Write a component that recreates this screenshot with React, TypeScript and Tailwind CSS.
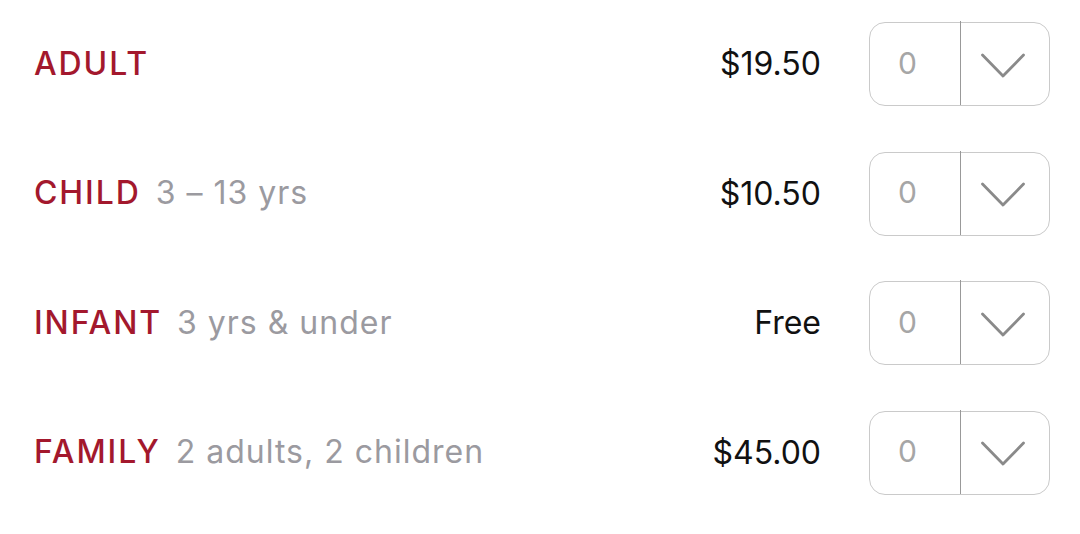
import React from "react";

const rows = [
  { label: "ADULT", desc: "", price: "$19.50" },
  { label: "CHILD", desc: "3 – 13 yrs", price: "$10.50" },
  { label: "INFANT", desc: "3 yrs & under", price: "Free" },
  { label: "FAMILY", desc: "2 adults, 2 children", price: "$45.00" },
];

function Chevron() {
  return (
    <svg width="46" height="28" viewBox="0 0 46 28" fill="none">
      <path d="M2.5 3 L23 24 L43.5 3" stroke="#8a8a8a" strokeWidth="2.8" strokeLinecap="round" strokeLinejoin="round" />
    </svg>
  );
}

export default function App() {
  return (
    <div
      className="w-[1080px] h-[534px] bg-white overflow-hidden flex flex-col gap-[45.6px] pt-[22px] pl-[34px] pr-[30px]"
      style={{ fontFamily: "Inter, 'Noto Sans', sans-serif" }}
    >
      {rows.map((r) => (
        <div key={r.label} className="flex items-center h-[84px]">
          <div className="flex items-baseline flex-1 -mt-[1px]">
            <span className="text-[32px] font-medium text-[#a3182d] tracking-[1.9px]">{r.label}</span>
            {r.desc && (
              <span className="ml-[15px] text-[32px] text-[#9b9aa0] tracking-[1px]">{r.desc}</span>
            )}
          </div>
          <div className="text-[32px] text-[#111] mr-[48px]">{r.price}</div>
          <div className="flex w-[181px] h-[84px] border border-[#cacaca] rounded-[16px]">
            <div className="w-[91px] flex items-center justify-start pl-[28px] text-[30px] text-[#a6a6a6] border-r border-[#999] -mt-[2px]">0</div>
            <div className="flex-1 flex items-center justify-center pt-[3px] pr-[4px]">
              <Chevron />
            </div>
          </div>
        </div>
      ))}
    </div>
  );
}
